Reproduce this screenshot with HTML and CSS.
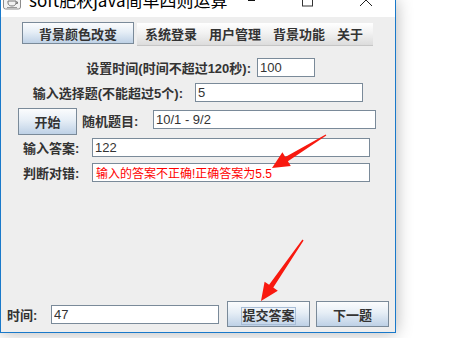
FILE: index.html
```html
<!DOCTYPE html>
<html lang="zh-CN">
<head>
    <meta charset="UTF-8">
    <meta name="viewport" content="width=device-width, initial-scale=1.0">
    <title>soft肥秋java简单四则运算</title>
    <link rel="stylesheet" href="styles.css">
</head>
<body>
    <div class="window">
        <div class="titlebar">
            <svg class="app-icon" width="19" height="10" viewBox="0 0 19 10">
                <rect x="0.5" y="-8" width="17" height="17" rx="2" fill="#f2f2f2" stroke="#8c8c8c"/>
                <path d="M5 1 h8 v2 c0 2 -2 3 -4 3 c-2 0 -4 -1 -4 -3 z" fill="none" stroke="#777" stroke-width="1"/>
                <path d="M13 2 h1.5 v1.5 h-1.5" fill="none" stroke="#777"/>
                <path d="M4 7.5 h10" stroke="#999"/>
            </svg>
            <span class="title">soft肥秋java简单四则运算</span>
            <svg class="controls" width="140" height="10" viewBox="0 0 140 10">
                <rect x="1" y="0" width="7" height="1" fill="#111"/>
                <rect x="55.5" y="-6" width="10" height="12" fill="none" stroke="#333"/>
                <path d="M113 -6 L119 0 L125 -6 M113 6 L119 0 L125 6" fill="none" stroke="#222" stroke-width="1"/>
            </svg>
        </div>
        <div class="content">
            <div class="menu-row">
                <button class="btn color-btn">背景颜色改变</button>
                <div class="menubar">
                    <span class="menu">系统登录</span>
                    <span class="menu">用户管理</span>
                    <span class="menu">背景功能</span>
                    <span class="menu">关于</span>
                </div>
            </div>

            <div class="row row-time">
                <label class="label time-label">设置时间(时间不超过120秒):</label>
                <input type="text" class="field time-field" value="100">
            </div>

            <div class="row row-count">
                <label class="label count-label">输入选择题(不能超过5个):</label>
                <input type="text" class="field count-field" value="5">
            </div>

            <div class="row row-start">
                <button class="btn start-btn">开始</button>
                <label class="label topic-label">随机题目:</label>
                <input type="text" class="field topic-field" value="10/1 - 9/2">
            </div>

            <div class="row row-answer">
                <label class="label side-label">输入答案:</label>
                <input type="text" class="field wide-field" value="122">
            </div>

            <div class="row row-judge">
                <label class="label side-label">判断对错:</label>
                <input type="text" class="field wide-field judge-field" value="输入的答案不正确!正确答案为5.5">
            </div>

            <div class="row row-bottom">
                <label class="label clock-label">时间:</label>
                <input type="text" class="field clock-field" value="47">
                <button class="btn submit-btn"><span class="focus">提交答案</span></button>
                <button class="btn next-btn">下一题</button>
            </div>
        </div>
    </div>

    <!-- annotation arrows drawn over the screenshot -->
    <svg class="arrows" width="454" height="338" viewBox="0 0 454 338">
        <polygon fill="#f8190f" points="326.3,135.6 325.7,134.4 285.3,157 282.4,152.2 272,168 290.8,166 287.9,161.2"/>
        <polygon fill="#f8190f" points="303.6,240.4 302.4,239.6 269.1,284.8 264.6,281.7 261,301 277.8,290.7 273.3,287.6"/>
    </svg>
</body>
</html>
```
FILE: styles.css
```css
body {
    margin: 0;
    width: 454px;
    height: 338px;
    background-color: white;
    position: relative;
    overflow: hidden;
    font-family: "Liberation Sans", "Noto Sans CJK SC", sans-serif;
}
.window {
    box-sizing: border-box;
    width: 396px;
    height: 333px;
    border: 1px solid #1979ca;
    border-top: none;
    background-color: #eeeeee;
    box-shadow: 0 0 16px rgba(0,0,0,0.3);
    display: flex;
    flex-direction: column;
}
.titlebar {
    height: 17px;
    background-color: white;
    display: flex;
    align-items: flex-start;
    overflow: hidden;
}
.app-icon {
    margin-left: 2px;
    flex: none;
}
.title {
    margin-left: 7px;
    margin-top: -9px;
    font-family: "Noto Sans CJK SC", sans-serif;
    font-size: 17px;
    line-height: 17px;
    color: #000;
    white-space: nowrap;
}
.controls {
    margin-left: auto;
    margin-right: 8px;
    flex: none;
}
.content {
    flex: 1;
    display: flex;
    flex-direction: column;
    padding-bottom: 5px;
}
.btn {
    box-sizing: border-box;
    border: 1px solid #7a8a99;
    border-radius: 0;
    background: linear-gradient(to bottom, #fbfcfd 0%, #e6eef6 45%, #bed1e6 100%);
    font-family: "Liberation Sans", "Noto Sans CJK SC", sans-serif;
    font-size: 13px;
    font-weight: bold;
    color: #333;
    padding: 0;
    margin: 0;
    cursor: pointer;
}
.label {
    font-family: "Liberation Sans", "Noto Sans CJK SC", sans-serif;
    font-size: 13px;
    font-weight: bold;
    color: #333;
    white-space: nowrap;
    flex: none;
}
.field {
    box-sizing: border-box;
    height: 19px;
    border: 1px solid #7a8a99;
    background-color: white;
    padding: 0 2px;
    margin: 0;
    font-family: "Liberation Sans", "Noto Sans CJK SC", sans-serif;
    font-size: 13px;
    color: #333;
    outline: none;
    flex: none;
}
.menu-row {
    display: flex;
    align-items: flex-start;
    margin-top: 5px;
    padding-left: 21px;
}
.color-btn {
    width: 112px;
    height: 22px;
}
.menubar {
    box-sizing: border-box;
    margin-left: 3px;
    margin-top: 1px;
    width: 236px;
    height: 23px;
    padding-left: 2px;
    background: linear-gradient(to bottom, #ffffff 0%, #f2f2f2 45%, #dcdcdc 100%);
    border-bottom: 1px solid #c6c6c6;
    display: flex;
    align-items: center;
}
.menu {
    padding: 0 6px;
    font-family: "Noto Sans CJK SC", sans-serif;
    font-size: 13px;
    font-weight: bold;
    color: #333;
    line-height: 22px;
}
.row {
    display: flex;
    align-items: center;
}
.row-time {
    margin-top: 12px;
    height: 19px;
}
.time-label {
    width: 250px;
    text-align: right;
}
.time-field {
    margin-left: 6px;
    width: 58px;
}
.row-count {
    margin-top: 6px;
    height: 19px;
}
.count-label {
    width: 182px;
    text-align: right;
}
.count-field {
    margin-left: 12px;
    width: 168px;
}
.row-start {
    margin-top: 6px;
    height: 27px;
    padding-left: 17px;
    align-items: flex-start;
}
.start-btn {
    width: 59px;
    height: 27px;
}
.topic-label {
    margin-left: 5px;
    width: 71px;
    line-height: 27px;
}
.topic-field {
    width: 223px;
    margin-top: 2px;
}
.row-answer {
    margin-top: 3px;
    height: 19px;
    padding-left: 22px;
}
.row-judge {
    margin-top: 6px;
    height: 19px;
    padding-left: 22px;
}
.side-label {
    width: 69px;
}
.wide-field {
    width: 278px;
}
.judge-field {
    color: #ff0000;
    font-size: 12px;
    padding-left: 3px;
}
.row-bottom {
    margin-top: auto;
    height: 26px;
    padding-left: 6px;
}
.clock-label {
    width: 44px;
}
.clock-field {
    width: 168px;
}
.submit-btn {
    margin-left: 8px;
    width: 83px;
    height: 26px;
}
.focus {
    border: 1px solid #a8bdd6;
    padding: 0 0 1px;
}
.next-btn {
    margin-left: 6px;
    width: 73px;
    height: 26px;
}
.arrows {
    position: absolute;
    left: 0;
    top: 0;
    pointer-events: none;
}
```
